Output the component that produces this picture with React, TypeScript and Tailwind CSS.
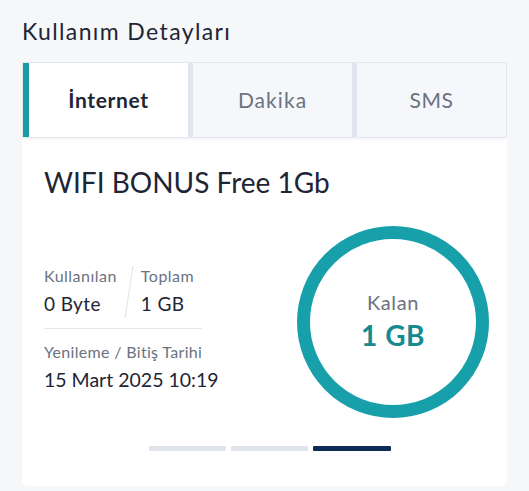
import React from "react";

export default function App() {
  const font = { fontFamily: "Lato, 'Noto Sans', sans-serif" };
  return (
    <div className="w-[529px] h-[491px] bg-[#f5f7f9] overflow-hidden" style={font}>
      <div className="px-[22px] pt-[17px]">
        <h1 className="text-[23px] leading-[28px] tracking-[0.06em] text-[#1e2535]">Kullanım Detayları</h1>
        <div className="mt-[17px] flex h-[76px] bg-[#e1e6ee] border border-[#e3e8ee] gap-[5px]">
          <div className="w-[165px] bg-white border-l-[6px] border-[#1a9aa4] flex items-center justify-center">
            <span className="text-[21px] font-bold tracking-[0.03em] text-[#1e2535]">İnternet</span>
          </div>
          <div className="w-[159px] bg-[#f5f7fa] flex items-center justify-center">
            <span className="text-[21px] tracking-[0.05em] text-[#6b7280]">Dakika</span>
          </div>
          <div className="flex-1 bg-[#f5f7fa] flex items-center justify-center">
            <span className="text-[21px] tracking-[0.03em] text-[#6b7280]">SMS</span>
          </div>
        </div>
        <div className="mt-[2px] h-[346px] bg-white rounded-b-[6px] pl-[22px] pr-[18px] pt-[25px] flex flex-col">
          <div className="text-[28px] leading-[34px] text-[#1e2535]">WIFI BONUS Free 1Gb</div>
          <div className="mt-[27px] flex items-start">
            <div className="flex-1 mt-[40px]">
              <div className="w-[158px] flex border-b border-[#e5e7eb] pb-[10px]">
                <div className="flex flex-col">
                  <span className="text-[16px] leading-[20px] tracking-[0.03em] text-[#6b7280]">Kullanılan</span>
                  <span className="mt-[6px] text-[19px] leading-[24px] tracking-[0.02em] text-[#1e2535]">0 Byte</span>
                </div>
                <svg width="16" height="52" className="mx-[4px] shrink-0" viewBox="0 0 16 52">
                  <line x1="12" y1="0" x2="4" y2="52" stroke="#e5e7eb" strokeWidth="1.2" />
                </svg>
                <div className="flex flex-col">
                  <span className="text-[16px] leading-[20px] tracking-[0.03em] text-[#6b7280]">Toplam</span>
                  <span className="mt-[6px] text-[19px] leading-[24px] tracking-[0.02em] text-[#1e2535]">1 GB</span>
                </div>
              </div>
              <div className="mt-[13px] text-[16px] leading-[20px] tracking-[0.02em] text-[#6b7280]">Yenileme / Bitiş Tarihi</div>
              <div className="mt-[6px] text-[19.5px] leading-[24px] text-[#1e2535]">15 Mart 2025 10:19</div>
            </div>
            <div className="relative w-[192px] h-[192px] shrink-0">
              <svg width="192" height="192" viewBox="0 0 192 192" className="absolute inset-0">
                <circle cx="96" cy="96" r="89.5" fill="none" stroke="#17a0aa" strokeWidth="13" />
              </svg>
              <div className="absolute inset-0 flex flex-col items-center pt-[64px]">
                <span className="text-[20px] leading-[24px] tracking-[0.03em] text-[#6b7280]">Kalan</span>
                <span className="mt-[5px] text-[28px] leading-[32px] font-bold tracking-[0.02em] text-[#168a91]">1 GB</span>
              </div>
            </div>
          </div>
          <div className="mt-[28px] flex justify-center gap-[5px] pl-[7px]">
            <div className="w-[77px] h-[5px] rounded-[1px] bg-[#dfe3ea]" />
            <div className="w-[77px] h-[5px] rounded-[1px] bg-[#dfe3ea]" />
            <div className="w-[78px] h-[5px] rounded-[1px] bg-[#0c2b55]" />
          </div>
        </div>
      </div>
    </div>
  );
}
